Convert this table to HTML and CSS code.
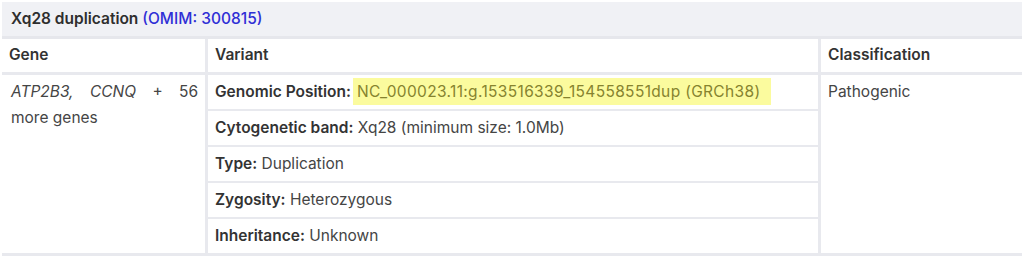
FILE: index.html
```html
<!DOCTYPE html>
<html>
<head>
<meta charset="utf-8">
<link rel="stylesheet" href="styles.css">
</head>
<body>
<div class="card">
  <div class="title">Xq28 duplication <a class="omim" href="#">(OMIM: 300815)</a></div>
  <div class="grid">
    <div class="cell head">Gene</div>
    <div class="cell head">Variant</div>
    <div class="cell head">Classification</div>
    <div class="cell genes"><i>ATP2B3,</i> <i>CCNQ</i> + 56 more genes</div>
    <div class="variant">
      <div class="cell"><b>Genomic Position:</b><span class="hl">NC_000023.11:g.153516339_154558551dup (GRCh38)</span></div>
      <div class="cell"><b>Cytogenetic band:</b> Xq28 (minimum size: 1.0Mb)</div>
      <div class="cell"><b>Type:</b> Duplication</div>
      <div class="cell"><b>Zygosity:</b> Heterozygous</div>
      <div class="cell"><b>Inheritance:</b> Unknown</div>
    </div>
    <div class="cell">Pathogenic</div>
  </div>
</div>
</body>
</html>
```
FILE: styles.css
```css
html, body { background: #fff; }
body {
  margin: 2px 2px 0 2px;
  font-family: Inter, "Noto Sans", sans-serif;
  font-size: 15.5px;
  color: #454545;
}
.card {
  background: #e8e9ee;
}
.title {
  background: #f0f1f5;
  height: 34px;
  line-height: 34px;
  padding: 0 9px;
  font-weight: 600;
  color: #2e2e2e;
  border-bottom: 3px solid #e6e7ec;
}
.omim {
  color: #2f2fd6;
  text-decoration: none;
  font-weight: 500;
}
.grid {
  display: grid;
  grid-template-columns: 203px 610px 1fr;
  column-gap: 3px;
  row-gap: 3px;
  padding-bottom: 3px;
}
.cell {
  background: #fff;
  line-height: 26px;
  padding: 4px 7px;
}
.head {
  height: 33px;
  box-sizing: border-box;
  padding: 3px 7px 4px;
  font-weight: 600;
  color: #333;
}
.genes {
  text-align: justify;
  padding-left: 9px;
}
.variant {
  display: flex;
  flex-direction: column;
  gap: 2px;
}
.variant .cell {
  height: 34px;
  box-sizing: border-box;
}
b {
  font-weight: 600;
  color: #333;
}
.hl {
  background: #fbfb9e;
  color: #86832f;
  letter-spacing: 0.34px;
  margin-left: 2px;
  padding: 4px 11px 4px 4px;
}
```
